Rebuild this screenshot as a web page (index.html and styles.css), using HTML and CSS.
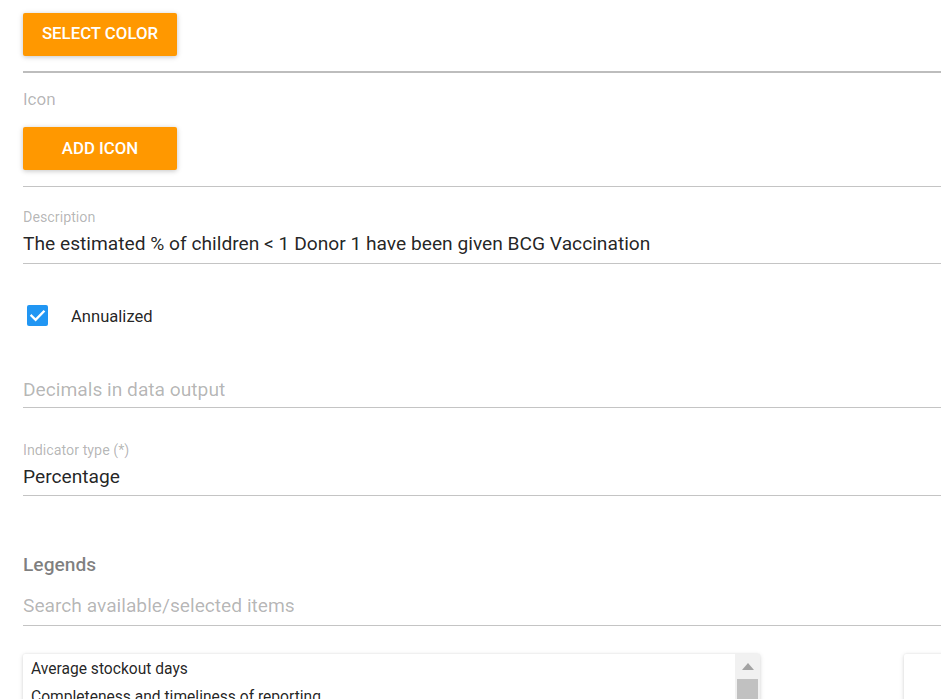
FILE: index.html
```html
<!DOCTYPE html>
<html>
<head>
<meta charset="utf-8">
<link rel="stylesheet" href="styles.css">
</head>
<body>
<div class="page">
  <button class="btn">SELECT COLOR</button>
  <div class="rule thick"></div>

  <div class="plain-label">Icon</div>
  <button class="btn btn-add">ADD ICON</button>
  <div class="rule rule-after-add"></div>

  <div class="field field-desc">
    <div class="label">Description</div>
    <div class="value">The estimated % of children &lt; 1 Donor 1 have been given BCG Vaccination</div>
    <div class="rule"></div>
  </div>

  <div class="check-row">
    <span class="checkbox">
      <svg viewBox="0 0 21 21" width="21" height="21"><path d="M4.5 10.8 L8.6 14.8 L16.6 6.6" fill="none" stroke="#fff" stroke-width="2.4" stroke-linecap="square"/></svg>
    </span>
    <span class="check-label">Annualized</span>
  </div>

  <div class="field field-decimals">
    <div class="value placeholder">Decimals in data output</div>
    <div class="rule"></div>
  </div>

  <div class="field field-type">
    <div class="label">Indicator type (*)</div>
    <div class="value">Percentage</div>
    <div class="rule"></div>
  </div>

  <div class="section-title">Legends</div>
  <div class="field field-search">
    <div class="value placeholder">Search available/selected items</div>
    <div class="rule"></div>
  </div>

  <div class="lists">
    <div class="listbox">
      <div class="items">
        <div class="item">Average stockout days</div>
        <div class="item">Completeness and timeliness of reporting</div>
        <div class="item">Stock levels</div>
      </div>
      <div class="scrollbar">
        <div class="arrow"></div>
        <div class="thumb"></div>
      </div>
    </div>
    <div class="listbox right"></div>
  </div>
</div>
</body>
</html>
```

FILE: styles.css
```css
html, body {
  margin: 0;
  padding: 0;
  background: #ffffff;
  overflow: hidden;
}
body {
  font-family: Roboto, "Liberation Sans", sans-serif;
  color: rgba(0, 0, 0, 0.87);
}
.page {
  padding: 13px 0 0 23px;
  width: 1000px;
  display: flex;
  flex-direction: column;
  align-items: flex-start;
}
.btn {
  width: 154px;
  height: 43px;
  border: none;
  border-radius: 2px;
  background: #ff9800;
  color: #ffffff;
  font-family: Roboto, "Liberation Sans", sans-serif;
  font-weight: 500;
  font-size: 16.8px;
  line-height: 20px;
  padding: 0 0 4px 0;
  box-shadow: 0 1px 6px rgba(0, 0, 0, 0.12), 0 1px 4px rgba(0, 0, 0, 0.12);
  cursor: pointer;
}
.btn-add {
  margin-top: 16px;
  padding: 0 0 2px 0;
}
.rule {
  align-self: stretch;
  height: 1px;
  background: #c4c4c4;
}
.rule.thick {
  height: 2px;
  margin-top: 15px;
  background: #bdbdbd;
}
.plain-label {
  margin-top: 15px;
  font-size: 17px;
  line-height: 23px;
  color: rgba(0, 0, 0, 0.3);
}
.rule-after-add {
  margin-top: 16px;
}
.field {
  align-self: stretch;
  display: flex;
  flex-direction: column;
}
.label {
  font-size: 14.3px;
  line-height: 16px;
  color: rgba(0, 0, 0, 0.3);
  margin-bottom: 5px;
}
.value {
  font-size: 19.2px;
  line-height: 28px;
  color: rgba(0, 0, 0, 0.87);
  margin-bottom: 5px;
}
.value.placeholder {
  color: rgba(0, 0, 0, 0.3);
}
.field-desc {
  margin-top: 22px;
}
.check-row {
  margin-top: 39px;
  display: flex;
  align-items: center;
  height: 24px;
}
.checkbox {
  width: 21px;
  height: 21px;
  margin-left: 4px;
  border-radius: 2px;
  background: #2196f3;
  display: flex;
}
.check-label {
  margin-left: 23px;
  padding-top: 4px;
  font-size: 16.6px;
  line-height: 24px;
  color: rgba(0, 0, 0, 0.87);
}
.field-decimals {
  margin-top: 49px;
}
.field-decimals .value {
  margin-bottom: 3px;
}
.field-type {
  margin-top: 34px;
}
.field-type .value {
  margin-bottom: 4px;
}
.section-title {
  margin-top: 57px;
  font-size: 19.2px;
  line-height: 24px;
  font-weight: 500;
  color: rgba(0, 0, 0, 0.5);
}
.field-search {
  margin-top: 15px;
}
.lists {
  margin-top: 28px;
  display: flex;
  gap: 144px;
  align-self: stretch;
}
.listbox {
  width: 737px;
  height: 200px;
  background: #ffffff;
  border-radius: 2px;
  box-shadow: 0 1px 5px rgba(0, 0, 0, 0.14), 0 0 2px rgba(0, 0, 0, 0.08);
  display: flex;
  flex-shrink: 0;
}
.listbox.right {
  width: 300px;
}
.items {
  flex: 1;
  padding-top: 1px;
}
.item {
  padding: 2px 8px;
  font-size: 15.6px;
  line-height: 24px;
  color: rgba(0, 0, 0, 0.87);
}
.scrollbar {
  width: 25px;
  background: #f1f1f1;
  display: flex;
  flex-direction: column;
  align-items: center;
}
.arrow {
  margin-top: 9px;
  width: 0;
  height: 0;
  border-left: 6px solid transparent;
  border-right: 6px solid transparent;
  border-bottom: 7px solid #a3a3a3;
}
.thumb {
  margin-top: 9px;
  width: 21px;
  height: 120px;
  background: #c1c1c1;
}
```
